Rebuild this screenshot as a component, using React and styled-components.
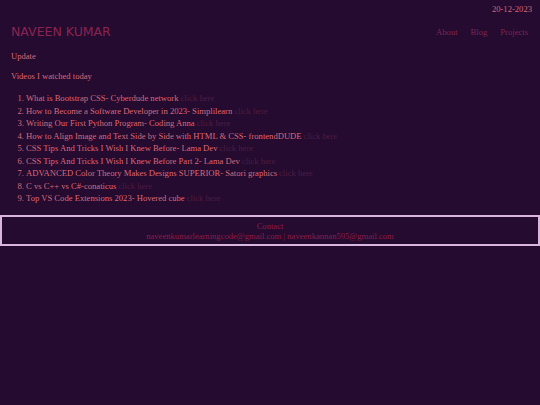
import styled, { createGlobalStyle } from 'styled-components';

const GlobalStyle = createGlobalStyle`
  html, body {
    margin: 0;
    padding: 0;
    background-color: #240b2f;
    min-height: 100%;
  }
  body {
    font-family: 'Liberation Serif', 'Times New Roman', serif;
  }
`;

const Page = styled.div`
  min-height: 405px;
  background-color: #240b2f;
`;

const DateBar = styled.div`
  text-align: right;
  padding: 3px 8px 0 0;
  font-size: 8.6px;
  line-height: 12px;
  color: #d6687a;
`;

const Header = styled.header`
  display: flex;
  justify-content: space-between;
  align-items: center;
  padding: 9px 12px 0 11px;
`;

const Title = styled.h1`
  margin: 0;
  font-family: 'DejaVu Sans', Verdana, sans-serif;
  font-weight: normal;
  font-size: 12.5px;
  color: #8a2451;
`;

const Nav = styled.nav`
  display: flex;
  gap: 13px;
`;

const NavLink = styled.a`
  font-size: 8.6px;
  color: #7c2654;
  text-decoration: none;
`;

const Content = styled.section`
  padding: 0 11px;
`;

const Label = styled.p`
  margin: ${(props) => props.$mt || '0'} 0 0 0;
  font-size: 8.6px;
  line-height: 12px;
  color: #dc6878;
`;

const VideoList = styled.ol`
  margin: 10px 0 0 0;
  padding-left: 15px;
  font-size: 8.6px;
  line-height: 12.5px;
  color: #dc6878;
`;

const VideoItem = styled.li``;

const ClickHere = styled.a`
  color: #4f1c45;
  text-decoration: none;
  margin-left: 2px;
`;

const ContactBox = styled.footer`
  margin-top: 10px;
  border: 2px solid #d9b6dd;
  padding: 4px 0 3px;
  text-align: center;
  font-size: 8.6px;
  line-height: 10px;
  color: #8e1c49;
`;

const videos = [
  'What is Bootstrap CSS- Cyberdude network',
  'How to Become a Software Developer in 2023- Simplilearn',
  'Writing Our First Python Program- Coding Anna',
  'How to Align Image and Text Side by Side with HTML & CSS- frontendDUDE',
  'CSS Tips And Tricks I Wish I Knew Before- Lama Dev',
  'CSS Tips And Tricks I Wish I Knew Before Part 2- Lama Dev',
  'ADVANCED Color Theory Makes Designs SUPERIOR- Satori graphics',
  'C vs C++ vs C#-conaticus',
  'Top VS Code Extensions 2023- Hovered cube',
];

const App = () => {
  return (
    <Page>
      <GlobalStyle />
      <DateBar>20-12-2023</DateBar>
      <Header>
        <Title>NAVEEN KUMAR</Title>
        <Nav>
          <NavLink href="#">About</NavLink>
          <NavLink href="#">Blog</NavLink>
          <NavLink href="#">Projects</NavLink>
        </Nav>
      </Header>
      <Content>
        <Label $mt="11px">Update</Label>
        <Label $mt="8px">Videos I watched today</Label>
        <VideoList>
          {videos.map((v) => (
            <VideoItem key={v}>
              {v}
              <ClickHere href="#">click here</ClickHere>
            </VideoItem>
          ))}
        </VideoList>
      </Content>
      <ContactBox>
        <div>Contact</div>
        <div>naveenkumarlearningcode@gmail.com | naveenkannan595@gmail.com</div>
      </ContactBox>
    </Page>
  );
};

export default App;
